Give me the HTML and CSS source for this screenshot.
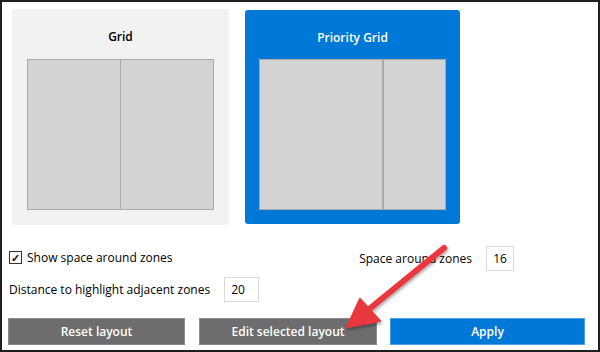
FILE: index.html
```html
<!DOCTYPE html>
<html lang="en">
<head>
  <meta charset="UTF-8" />
  <title>Layout editor</title>
  <link rel="stylesheet" href="styles.css">
</head>
<body>
  <div class="frame">

    <!-- Layout picker -->
    <div class="layouts">
      <div class="card">
        <div class="card-title">Grid</div>
        <div class="preview">
          <div class="zone"></div>
          <div class="zone"></div>
        </div>
      </div>
      <div class="card selected">
        <div class="card-title">Priority Grid</div>
        <div class="preview priority">
          <div class="zone"></div>
          <div class="zone"></div>
        </div>
      </div>
    </div>

    <!-- Options -->
    <div class="options">
      <div class="row">
        <label class="check"><span class="box">&#10003;</span>Show space around zones</label>
        <div class="field space">
          <span>Space around zones</span>
          <div class="num">16</div>
        </div>
      </div>
      <div class="row">
        <div class="field">
          <span>Distance to highlight adjacent zones</span>
          <div class="num wide">20</div>
        </div>
      </div>
    </div>

    <div class="buttons">
      <button class="btn gray reset">Reset layout</button>
      <button class="btn gray edit">Edit selected layout</button>
      <button class="btn blue apply">Apply</button>
    </div>

    <!-- annotation arrow -->
    <svg class="arrow" width="600" height="352" viewBox="0 0 600 352">
      <defs>
        <filter id="sh" x="-20%" y="-20%" width="140%" height="140%">
          <feDropShadow dx="1" dy="2" stdDeviation="1.5" flood-color="#000" flood-opacity="0.35"/>
        </filter>
      </defs>
      <g filter="url(#sh)" fill="#e8373d" stroke="#e8373d" stroke-linecap="round" stroke-linejoin="round">
        <line x1="444" y1="248" x2="368" y2="310" stroke-width="6"/>
        <polygon points="347,327 360,299 380,321" stroke-width="2"/>
      </g>
    </svg>
  </div>
</body>
</html>
```

FILE: styles.css
```css
body {
  margin: 0;
  font-family: "Open Sans", "Noto Sans", sans-serif;
  font-size: 12px;
  color: #000;
  background: #fff;
}

.frame {
  position: relative;
  width: 600px;
  height: 352px;
  box-sizing: border-box;
  border: 2px solid #1e1e1e;
  overflow: hidden;
}

.layouts {
  display: flex;
  gap: 16px;
  padding: 7px 0 0 10px;
}

.card {
  width: 217px;
  height: 216px;
  box-sizing: border-box;
  background: #f2f2f2;
  border-radius: 3px;
  padding: 0 15px;
}

.card.selected {
  background: #0078d7;
  color: #fff;
  width: 215px;
  height: 214px;
  margin-top: 1px;
  padding: 0 14px;
}

.card-title {
  font-weight: 600;
  text-align: center;
  height: 50px;
  line-height: 56px;
}

.card.selected .card-title {
  height: 49px;
}

.preview {
  display: flex;
  height: 151px;
  background: #a9a9a9;
  border: 1px solid #a9a9a9;
  box-sizing: border-box;
  gap: 1px;
}

.zone {
  flex: 1;
  background: #d3d3d3;
}

.priority .zone:first-child {
  flex: 2;
  margin-right: 1px;
}

.options {
  padding: 21px 0 0 7px;
}

.row {
  display: flex;
  align-items: center;
  justify-content: space-between;
  height: 25px;
}

.row + .row {
  margin-top: 6px;
}

.check {
  display: flex;
  align-items: center;
  font-weight: 500;
  margin-top: -2px;
}

.box {
  width: 11px;
  height: 11px;
  border: 1px solid #333;
  margin-right: 5px;
  font-size: 11px;
  line-height: 11px;
  text-align: center;
  font-weight: 700;
  color: #111;
}

.field {
  display: flex;
  align-items: center;
  font-weight: 500;
}

.field.space {
  margin-right: 84px;
}

.num {
  width: 28px;
  height: 25px;
  box-sizing: border-box;
  border: 1px solid #d9d9d9;
  margin-left: 14px;
  line-height: 23px;
  text-align: center;
  font-weight: 400;
}

.num.wide {
  width: 35px;
  text-align: left;
  padding-left: 6px;
}

.buttons {
  display: flex;
  padding: 16px 0 0 6px;
}

.btn {
  height: 27px;
  border: 1px solid #8a8a8a;
  font-family: inherit;
  font-size: 12px;
  font-weight: 600;
  color: #fff;
  padding: 0;
}

.gray {
  background: #6d6d6d;
}

.blue {
  background: #0078d7;
  border-color: #4aa0e6;
}

.reset {
  width: 177px;
}

.edit {
  width: 178px;
  margin-left: 14px;
}

.apply {
  width: 195px;
  margin-left: 13px;
}

.arrow {
  position: absolute;
  left: -2px;
  top: -2px;
  pointer-events: none;
}
```
